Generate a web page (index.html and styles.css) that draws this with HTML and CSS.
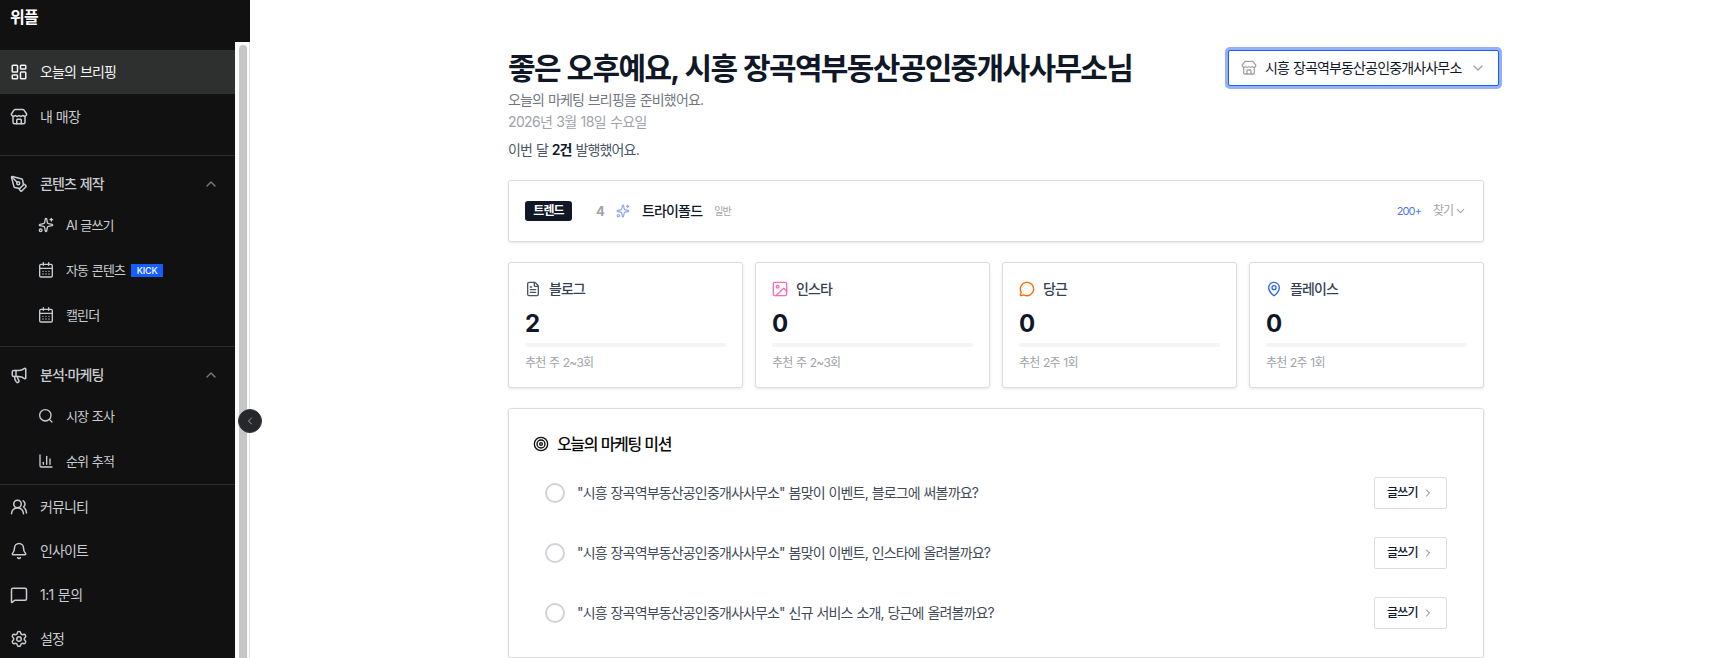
FILE: index.html
```html
<!DOCTYPE html>
<html lang="ko">
<head>
<meta charset="utf-8">
<title>위플</title>
<link rel="stylesheet" href="styles.css">
</head>
<body>
<svg class="sprite">
  <symbol id="dashboard" viewBox="0 0 24 24"><rect width="7" height="9" x="3" y="3" rx="1"/><rect width="7" height="5" x="14" y="3" rx="1"/><rect width="7" height="9" x="14" y="12" rx="1"/><rect width="7" height="5" x="3" y="16" rx="1"/></symbol>
  <symbol id="store" viewBox="0 0 24 24"><path d="M15 21v-5a1 1 0 0 0-1-1h-4a1 1 0 0 0-1 1v5"/><path d="M17.774 10.31a1.12 1.12 0 0 0-1.549 0 2.5 2.5 0 0 1-3.451 0 1.12 1.12 0 0 0-1.548 0 2.5 2.5 0 0 1-3.452 0 1.12 1.12 0 0 0-1.549 0 2.5 2.5 0 0 1-3.77-3.248l2.889-4.184A2 2 0 0 1 7 2h10a2 2 0 0 1 1.653.873l2.895 4.192a2.5 2.5 0 0 1-3.774 3.244"/><path d="M4 10.95V19a2 2 0 0 0 2 2h12a2 2 0 0 0 2-2v-8.05"/></symbol>
  <symbol id="pen" viewBox="0 0 24 24"><path d="M15.707 21.293a1 1 0 0 1-1.414 0l-1.586-1.586a1 1 0 0 1 0-1.414l5.586-5.586a1 1 0 0 1 1.414 0l1.586 1.586a1 1 0 0 1 0 1.414z"/><path d="m18 13-1.375-6.874a1 1 0 0 0-.746-.776L3.235 2.028a1 1 0 0 0-1.207 1.207L5.35 15.879a1 1 0 0 0 .776.746L13 18"/><path d="m2.3 2.3 7.286 7.286"/><circle cx="11" cy="11" r="2"/></symbol>
  <symbol id="sparkles" viewBox="0 0 24 24"><path d="M11.017 2.814a1 1 0 0 1 1.966 0l1.051 5.558a2 2 0 0 0 1.594 1.594l5.558 1.051a1 1 0 0 1 0 1.966l-5.558 1.051a2 2 0 0 0-1.594 1.594l-1.051 5.558a1 1 0 0 1-1.966 0l-1.051-5.558a2 2 0 0 0-1.594-1.594l-5.558-1.051a1 1 0 0 1 0-1.966l5.558-1.051a2 2 0 0 0 1.594-1.594z"/><path d="M20 2v4"/><path d="M22 4h-4"/><circle cx="4" cy="20" r="2"/></symbol>
  <symbol id="calendar" viewBox="0 0 24 24"><path d="M8 1v4"/><path d="M16 1v4"/><rect width="19" height="19" x="2.5" y="3.5" rx="2"/><path d="M3 9.5h18"/><path d="M7.5 14h.01"/><path d="M12 14h.01"/><path d="M16.5 14h.01"/><path d="M7.5 18h.01"/><path d="M12 18h.01"/><path d="M16.5 18h.01"/></symbol>
  <symbol id="megaphone" viewBox="0 0 24 24"><path d="M11 6a13 13 0 0 0 8.4-2.8A1 1 0 0 1 21 4v12a1 1 0 0 1-1.6.8A13 13 0 0 0 11 14H5a2 2 0 0 1-2-2V8a2 2 0 0 1 2-2z"/><path d="M6 14a12 12 0 0 0 2.4 7.2 2 2 0 0 0 3.2-2.4A8 8 0 0 1 10 14"/><path d="M8 6v8"/></symbol>
  <symbol id="search" viewBox="0 0 24 24"><circle cx="11" cy="11" r="8.5"/><path d="m21 21-3.9-3.9"/></symbol>
  <symbol id="chart" viewBox="0 0 24 24"><path d="M3 3v16a2 2 0 0 0 2 2h16"/><path d="M18 17V9"/><path d="M13 17V5"/><path d="M8 17v-3"/></symbol>
  <symbol id="users" viewBox="0 0 24 24"><path d="M18 21a8 8 0 0 0-16 0"/><circle cx="10" cy="8" r="5"/><path d="M22 20c0-3.37-2-6.5-4-8a5 5 0 0 0-.45-8.3"/></symbol>
  <symbol id="bell" viewBox="0 0 24 24"><path d="M10.268 21a2 2 0 0 0 3.464 0"/><path d="M3.262 15.326A1 1 0 0 0 4 17h16a1 1 0 0 0 .74-1.673C19.41 13.956 18 12.499 18 8A6 6 0 0 0 6 8c0 4.499-1.411 5.956-2.738 7.326"/></symbol>
  <symbol id="message" viewBox="0 0 24 24"><path d="M22 17a2 2 0 0 1-2 2H6.828a2 2 0 0 0-1.414.586l-2.202 2.202A.71.71 0 0 1 2 21.286V5a2 2 0 0 1 2-2h16a2 2 0 0 1 2 2z"/></symbol>
  <symbol id="settings" viewBox="0 0 24 24"><path d="M9.671 4.136a2.34 2.34 0 0 1 4.659 0 2.34 2.34 0 0 0 3.319 1.915 2.34 2.34 0 0 1 2.33 4.033 2.34 2.34 0 0 0 0 3.831 2.34 2.34 0 0 1-2.33 4.033 2.34 2.34 0 0 0-3.319 1.915 2.34 2.34 0 0 1-4.659 0 2.34 2.34 0 0 0-3.32-1.915 2.34 2.34 0 0 1-2.33-4.033 2.34 2.34 0 0 0 0-3.831A2.34 2.34 0 0 1 6.35 6.051a2.34 2.34 0 0 0 3.319-1.915"/><circle cx="12" cy="12" r="3"/></symbol>
  <symbol id="file" viewBox="0 0 24 24"><path d="M6 22a2 2 0 0 1-2-2V4a2 2 0 0 1 2-2h8a2.4 2.4 0 0 1 1.704.706l3.588 3.588A2.4 2.4 0 0 1 20 8v12a2 2 0 0 1-2 2z"/><path d="M14 2v5a1 1 0 0 0 1 1h5"/><path d="M10 9H8"/><path d="M16 13H8"/><path d="M16 17H8"/></symbol>
  <symbol id="image" viewBox="0 0 24 24"><rect width="20" height="20" x="2" y="2" rx="2"/><circle cx="8.5" cy="8.5" r="2"/><path d="m22 15-3.1-3.1a2 2 0 0 0-2.8 0L6 22"/></symbol>
  <symbol id="bubble" viewBox="0 0 24 24"><path d="M2.992 16.342a2 2 0 0 1 .094 1.167l-1.065 3.29a1 1 0 0 0 1.236 1.168l3.413-.998a2 2 0 0 1 1.099.092 10 10 0 1 0-4.777-4.719"/></symbol>
  <symbol id="pin" viewBox="0 0 24 24"><path d="M20 10c0 4.993-5.539 10.193-7.399 11.799a1 1 0 0 1-1.202 0C9.539 20.193 4 14.993 4 10a8 8 0 0 1 16 0"/><circle cx="12" cy="10" r="3"/></symbol>
  <symbol id="target" viewBox="0 0 24 24"><circle cx="12" cy="12" r="10"/><circle cx="12" cy="12" r="6"/><circle cx="12" cy="12" r="2"/></symbol>
  <symbol id="up" viewBox="0 0 24 24"><path d="m18 15-6-6-6 6"/></symbol>
  <symbol id="down" viewBox="0 0 24 24"><path d="m6 9 6 6 6-6"/></symbol>
  <symbol id="right" viewBox="0 0 24 24"><path d="m9 18 6-6-6-6"/></symbol>
  <symbol id="left" viewBox="0 0 24 24"><path d="m15 18-6-6 6-6"/></symbol>
</svg>

<div class="app">
  <aside class="sidebar">
    <div class="brand">위플</div>
    <div class="sidebar-body">
      <nav class="nav">
        <a class="item active"><svg class="icon"><use href="#dashboard"/></svg>오늘의 브리핑</a>
        <a class="item"><svg class="icon"><use href="#store"/></svg>내 매장</a>
        <section class="group group-content">
          <div class="group-title"><svg class="icon"><use href="#pen"/></svg>콘텐츠 제작<svg class="icon caret"><use href="#up"/></svg></div>
          <a class="sub"><svg class="icon"><use href="#sparkles"/></svg>AI 글쓰기</a>
          <a class="sub"><svg class="icon"><use href="#calendar"/></svg>자동 콘텐츠<span class="kick">KICK</span></a>
          <a class="sub"><svg class="icon"><use href="#calendar"/></svg>캘린더</a>
        </section>
        <section class="group">
          <div class="group-title"><svg class="icon"><use href="#megaphone"/></svg>분석·마케팅<svg class="icon caret"><use href="#up"/></svg></div>
          <a class="sub"><svg class="icon"><use href="#search"/></svg>시장 조사</a>
          <a class="sub"><svg class="icon"><use href="#chart"/></svg>순위 추적</a>
        </section>
        <section class="links">
          <a class="item"><svg class="icon"><use href="#users"/></svg>커뮤니티</a>
          <a class="item"><svg class="icon"><use href="#bell"/></svg>인사이트</a>
          <a class="item inquiry"><svg class="icon"><use href="#message"/></svg>1:1 문의</a>
          <a class="item"><svg class="icon"><use href="#settings"/></svg>설정</a>
        </section>
      </nav>
      <div class="scrollbar"><div class="thumb"></div></div>
    </div>
    <button class="collapse"><svg class="icon"><use href="#left"/></svg></button>
  </aside>

  <main class="main">
    <header class="header">
      <div class="greeting">
        <h1>좋은 오후예요, 시흥 장곡역부동산공인중개사사무소님</h1>
        <p class="lead">오늘의 마케팅 브리핑을 준비했어요.</p>
        <p class="date">2026년 3월 18일 수요일</p>
        <p class="summary">이번 달 <strong>2건</strong> 발행했어요.</p>
      </div>
      <button class="store-select"><svg class="icon"><use href="#store"/></svg><span>시흥 장곡역부동산공인중개사사무소</span><svg class="icon arrow"><use href="#down"/></svg></button>
    </header>

    <section class="card trend">
      <span class="badge">트렌드</span>
      <span class="rank">4</span>
      <svg class="icon"><use href="#sparkles"/></svg>
      <span class="keyword">트라이폴드</span>
      <span class="kind">일반</span>
      <span class="volume">200+</span>
      <span class="find">찾기</span>
      <svg class="icon more"><use href="#down"/></svg>
    </section>

    <section class="stats">
      <div class="card stat">
        <div class="stat-head"><svg class="icon blog"><use href="#file"/></svg>블로그</div>
        <div class="count">2</div>
        <div class="bar"></div>
        <div class="hint">추천 주 2~3회</div>
      </div>
      <div class="card stat">
        <div class="stat-head"><svg class="icon insta"><use href="#image"/></svg>인스타</div>
        <div class="count">0</div>
        <div class="bar"></div>
        <div class="hint">추천 주 2~3회</div>
      </div>
      <div class="card stat">
        <div class="stat-head"><svg class="icon daangn"><use href="#bubble"/></svg>당근</div>
        <div class="count">0</div>
        <div class="bar"></div>
        <div class="hint">추천 2주 1회</div>
      </div>
      <div class="card stat">
        <div class="stat-head"><svg class="icon place"><use href="#pin"/></svg>플레이스</div>
        <div class="count">0</div>
        <div class="bar"></div>
        <div class="hint">추천 2주 1회</div>
      </div>
    </section>

    <section class="card missions">
      <h2><svg class="icon"><use href="#target"/></svg>오늘의 마케팅 미션</h2>
      <div class="mission">
        <span class="check"></span>
        <p>"시흥 장곡역부동산공인중개사사무소" 봄맞이 이벤트, 블로그에 써볼까요?</p>
        <button class="write">글쓰기<svg class="icon"><use href="#right"/></svg></button>
      </div>
      <div class="mission">
        <span class="check"></span>
        <p>"시흥 장곡역부동산공인중개사사무소" 봄맞이 이벤트, 인스타에 올려볼까요?</p>
        <button class="write">글쓰기<svg class="icon"><use href="#right"/></svg></button>
      </div>
      <div class="mission">
        <span class="check"></span>
        <p>"시흥 장곡역부동산공인중개사사무소" 신규 서비스 소개, 당근에 올려볼까요?</p>
        <button class="write">글쓰기<svg class="icon"><use href="#right"/></svg></button>
      </div>
    </section>
  </main>
</div>
</body>
</html>
```
FILE: styles.css
```css
* {
  box-sizing: border-box;
}
body {
  margin: 0;
  height: 658px;
  overflow: hidden;
  background: #fff;
  color: #101828;
  font-family: Inter, "Noto Sans CJK KR", sans-serif;
  font-size: 14px;
  line-height: 20px;
  letter-spacing: -0.06em;
  word-spacing: 0.05em;
}
h1, h2, p {
  margin: 0;
}
button {
  font: inherit;
  letter-spacing: inherit;
  word-spacing: inherit;
  color: inherit;
  background: #fff;
  padding: 0;
}
.sprite {
  display: none;
}
.icon {
  width: 16px;
  height: 16px;
  flex: none;
  fill: none;
  stroke: currentColor;
  stroke-width: 2;
  stroke-linecap: round;
  stroke-linejoin: round;
}
.app {
  display: flex;
  height: 658px;
}

/* sidebar */
.sidebar {
  position: relative;
  flex: none;
  display: flex;
  flex-direction: column;
  width: 250px;
  background: #111;
}
.brand {
  height: 42px;
  padding: 7px 10px;
  color: #fff;
  font-size: 16px;
  font-weight: 700;
}
.sidebar-body {
  display: flex;
  flex: 1;
  min-height: 0;
}
.nav {
  width: 235px;
  padding-top: 8px;
  color: #c9ccd2;
}
.item,
.group-title,
.sub {
  display: flex;
  align-items: center;
}
.item {
  height: 44px;
  gap: 12px;
  padding-left: 10px;
}
.item .icon,
.group-title .icon {
  width: 18px;
  height: 18px;
}
.item.active {
  color: #f3f4f6;
  background: #2e2f2f;
  margin-bottom: 1px;
}
.group {
  border-top: 1px solid #2d2d2d;
  padding-top: 7px;
  height: 138px;
}
.group-content {
  margin-top: 16px;
  height: 191px;
}
.group-title {
  height: 41px;
  gap: 12px;
  padding: 0 16px 0 10px;
  font-weight: 500;
}
.group-title .caret {
  width: 16px;
  height: 16px;
  margin-left: auto;
  color: #777b84;
}
.sub {
  height: 45px;
  padding-left: 38px;
  font-size: 13px;
}
.sub .icon {
  margin-right: 12px;
}
.sub:nth-child(2) {
  margin-top: -2px;
}
.kick {
  height: 13px;
  width: 32px;
  margin: 2px 0 0 6px;
  background: #155dfc;
  color: #fff;
  font-size: 9px;
  font-weight: 500;
  line-height: 13px;
  letter-spacing: -0.2px;
  text-align: center;
}
.links {
  border-top: 1px solid #2d2d2d;
}
.inquiry {
  letter-spacing: -0.04em;
}
.scrollbar {
  width: 15px;
  padding: 3px 2px 0 4px;
  background: #fafafa;
  border-right: 1px solid #e5e5e5;
}
.thumb {
  width: 8px;
  height: 100%;
  border-radius: 4px 4px 0 0;
  background: #c6c6c6;
}
/* sits over the sidebar edge */
.collapse {
  position: absolute;
  top: 409px;
  right: -12px;
  display: flex;
  align-items: center;
  justify-content: center;
  width: 24px;
  height: 24px;
  border: 1px solid #36373a;
  border-radius: 50%;
  background: #25272a;
  color: #99a1af;
}
.collapse .icon {
  width: 12px;
  height: 12px;
}

/* main column */
.main {
  width: 976px;
  margin-left: 258px;
  padding-top: 50px;
}
.header {
  display: flex;
  justify-content: space-between;
  height: 130px;
  margin-right: -15px;
}
h1 {
  font-size: 30px;
  line-height: 36px;
  font-weight: 700;
  letter-spacing: -0.055em;
  word-spacing: 0.04em;
  white-space: nowrap;
}
.lead {
  margin-top: 4px;
  color: #73777f;
}
.date {
  margin-top: 2px;
  color: #a0a3a9;
  letter-spacing: -0.045em;
}
.summary {
  margin-top: 8px;
  color: #4a5565;
}
.summary strong {
  color: #101828;
  font-weight: 600;
}
.store-select {
  display: flex;
  align-items: center;
  width: 271px;
  height: 36px;
  padding: 0 12px;
  border: 1px solid #155dfc;
  border-radius: 2px;
  box-shadow: 0 0 0 3px #97aff5;
  white-space: nowrap;
}
.store-select .icon {
  margin-right: 8px;
  color: #a0a3a9;
}
.store-select .arrow {
  margin: 0 0 0 auto;
}
.card {
  border: 1px solid #dcdde0;
  border-radius: 3px;
  background: #fff;
  box-shadow: 0 1px 3px rgba(0, 0, 0, 0.1);
}
.trend {
  display: flex;
  align-items: center;
  height: 62px;
  padding: 0 16px;
}
.badge {
  height: 20px;
  width: 47px;
  margin-right: 24px;
  border-radius: 3px;
  background: #101828;
  color: #fff;
  font-size: 12px;
  font-weight: 700;
  text-align: center;
}
.rank {
  width: 20px;
  color: #a0a3a9;
  font-size: 13px;
  font-weight: 700;
}
.trend .icon {
  width: 14px;
  height: 14px;
  color: #8ca6f0;
}
.keyword {
  margin-left: 12px;
  font-weight: 500;
}
.kind {
  margin-left: 12px;
  color: #a0a3a9;
  font-size: 10px;
}
.volume {
  margin-left: auto;
  color: #4f78ec;
  font-size: 11px;
  letter-spacing: -0.08em;
}
.find {
  margin: 0 1px 0 12px;
  color: #a0a3a9;
  font-size: 12px;
  letter-spacing: -0.09em;
}
.trend .more {
  width: 13px;
  color: #a0a3a9;
}
.stats {
  display: grid;
  grid-template-columns: repeat(4, 1fr);
  gap: 12px;
  margin: 20px 0;
}
.stat {
  height: 126px;
  padding: 16px;
}
.stat-head {
  display: flex;
  align-items: center;
  gap: 8px;
  color: #364153;
  font-weight: 500;
}
.blog {
  color: #4a5565;
}
.insta {
  color: #f96bb5;
}
.daangn {
  color: #ff6900;
}
.place {
  color: #2b63ee;
}
.count {
  margin-top: 9px;
  font-size: 24px;
  line-height: 32px;
  font-weight: 700;
}
.bar {
  height: 4px;
  margin-top: 3px;
  border-radius: 2px;
  background: #f3f4f4;
}
.hint {
  margin-top: 6px;
  color: #a0a3a9;
  font-size: 12px;
  letter-spacing: -0.06em;
  word-spacing: 0.06em;
}
.missions {
  height: 250px;
  padding: 23px 24px;
}
h2 {
  display: flex;
  align-items: center;
  gap: 8px;
  height: 24px;
  margin-bottom: 7px;
  font-size: 16px;
  font-weight: 500;
  letter-spacing: -0.085em;
  color: #0a0a0a;
}
.mission {
  display: flex;
  align-items: center;
  height: 60px;
  padding: 0 12px;
}
.check {
  width: 20px;
  height: 20px;
  border: 2px solid #d2d3d9;
  border-radius: 50%;
}
.mission p {
  margin-left: 12px;
  color: #424a57;
}
.write {
  display: flex;
  align-items: center;
  gap: 4px;
  width: 73px;
  height: 32px;
  margin-left: auto;
  padding-left: 12px;
  border: 1px solid #dcdde0;
  border-radius: 2px;
  font-size: 12px;
  font-weight: 500;
}
.write .icon {
  width: 12px;
  height: 12px;
  color: #6a7282;
}
```
